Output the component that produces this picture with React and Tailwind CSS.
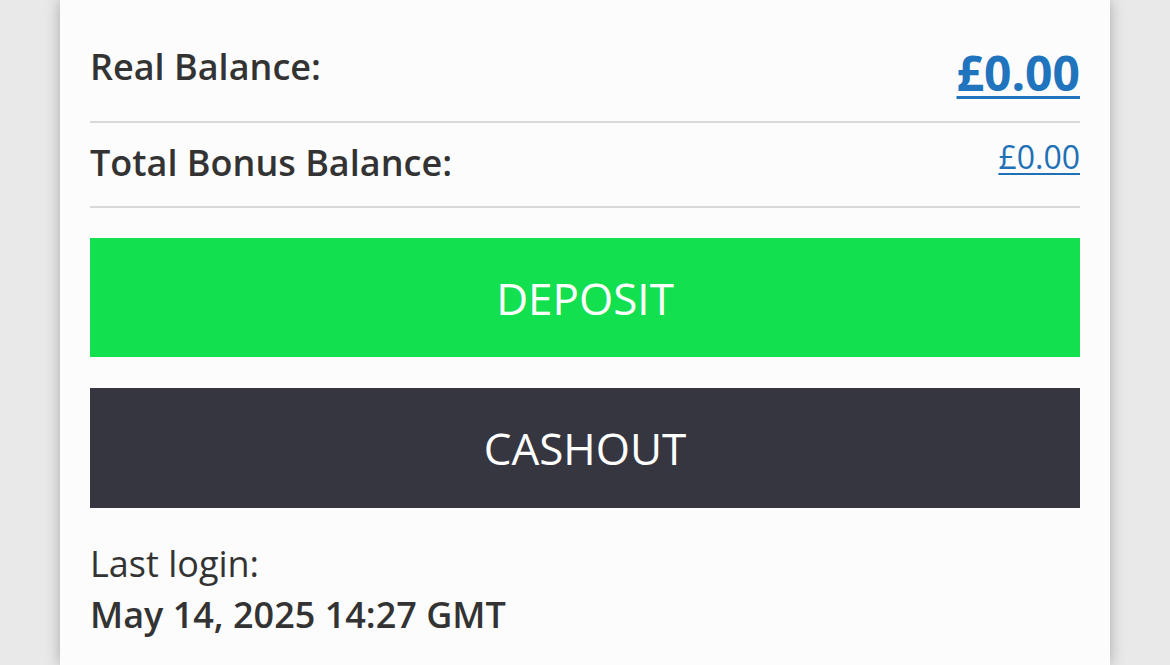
export default function App() {
  const font = { fontFamily: '"Open Sans", "Noto Sans", sans-serif' };
  return (
    <div className="h-[665px] w-full overflow-hidden bg-[#e9e9ea] flex justify-center" style={font}>
      <div className="w-[1050px] h-full bg-[#fcfcfc] px-[30px] shadow-[0_0_14px_rgba(0,0,0,0.28)] flex flex-col">
        <div className="h-[121px] flex items-start justify-between">
          <span className="mt-[42px] text-[36px] leading-[49px] font-semibold text-[#333333]">Real Balance:</span>
          <a className="mt-[40px] text-[48px] leading-[65px] font-bold text-[#1f74bd] underline decoration-[3px] underline-offset-[5px]">£0.00</a>
        </div>
        <div className="h-[2px] bg-[#d9d9d9]" />
        <div className="h-[83px] flex items-start justify-between">
          <span className="mt-[15px] text-[36px] leading-[49px] font-semibold text-[#333333]">Total Bonus Balance:</span>
          <a className="mt-[12px] text-[32px] leading-[44px] font-normal text-[#1f70b5] underline decoration-[2px] underline-offset-[4px]">£0.00</a>
        </div>
        <div className="h-[2px] bg-[#d9d9d9]" />
        <div className="mt-[30px] h-[119px] bg-[#13e04f] flex items-center justify-center text-white text-[44px]">DEPOSIT</div>
        <div className="mt-[31px] h-[120px] bg-[#363641] flex items-center justify-center text-white text-[44px]">CASHOUT</div>
        <div className="mt-[30px] text-[36px] leading-[51px] text-[#333333]">
          <div>Last login:</div>
          <div className="font-semibold">May 14, 2025 14:27 GMT</div>
        </div>
      </div>
    </div>
  );
}
